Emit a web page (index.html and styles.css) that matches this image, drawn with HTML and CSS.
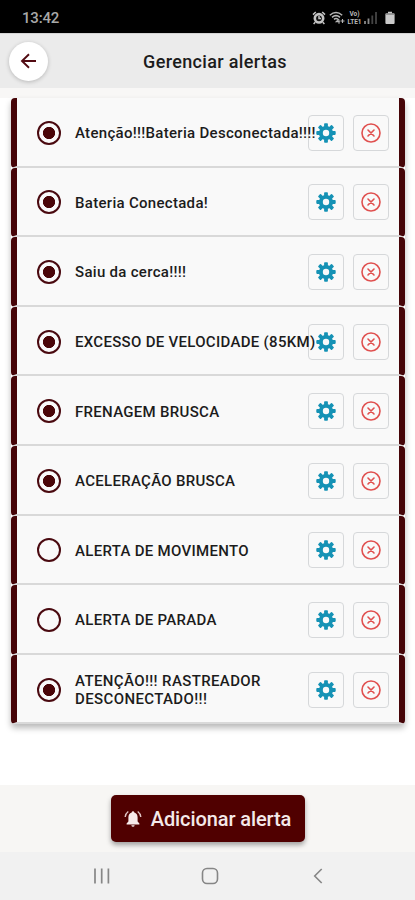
FILE: index.html
```html
<!DOCTYPE html>
<html lang="pt-BR">
<head>
    <meta charset="UTF-8">
    <meta name="viewport" content="width=device-width, initial-scale=1.0">
    <title>Gerenciar alertas</title>
    <link rel="stylesheet" href="styles.css">
</head>
<body>

    <!-- Shared icons -->
    <svg class="sprite" width="0" height="0">
        <symbol id="gear" viewBox="0 0 20 20">
            <g fill="#1592b5">
                <rect x="8.1" y="0.3" width="3.8" height="19.4" rx="0.8"/>
                <rect x="8.1" y="0.3" width="3.8" height="19.4" rx="0.8" transform="rotate(45 10 10)"/>
                <rect x="8.1" y="0.3" width="3.8" height="19.4" rx="0.8" transform="rotate(90 10 10)"/>
                <rect x="8.1" y="0.3" width="3.8" height="19.4" rx="0.8" transform="rotate(135 10 10)"/>
                <circle cx="10" cy="10" r="7.1"/>
            </g>
            <circle cx="10" cy="10" r="3.2" fill="#fafafa"/>
        </symbol>
        <symbol id="remove" viewBox="0 0 20 20">
            <g fill="none" stroke="#e0504f" stroke-width="1.6" stroke-linecap="round">
                <circle cx="10" cy="10" r="9"/>
                <path d="M7 7l6 6M13 7l-6 6"/>
            </g>
        </symbol>
    </svg>

    <div class="status-bar">
        <span class="time">13:42</span>
        <div class="status-icons">
            <svg width="14" height="14" viewBox="0 0 14 14">
                <circle cx="7" cy="7.3" r="4.2" fill="#111" stroke="#c4c4c4" stroke-width="2.6"/>
                <path d="M1 3.6L3.8 1M13 3.6L10.2 1M3.2 11.2L1.6 13M10.8 11.2L12.4 13M7 5v2.5h2" fill="none" stroke="#c4c4c4" stroke-width="1.5"/>
            </svg>
            <svg class="wifi" width="16" height="14" viewBox="0 0 16 14">
                <path d="M0.8 4.2Q7 -1.2 13.2 4.2M3 6.3Q7 3 11 6.3M5 8.4Q7 6.6 9 8.4" fill="none" stroke="#b5b5b5" stroke-width="1.5"/>
                <path d="M9.8 8.2L7.2 10.6h3.6M10 8.5v4.3M11.5 10h4M13.5 8v4" fill="none" stroke="#b5b5b5" stroke-width="1.1"/>
            </svg>
            <span class="volte"><span>Vo)</span><span>LTE1</span></span>
            <svg width="14" height="14" viewBox="0 0 14 14">
                <path d="M1 10v3M4.5 7.5V13" stroke="#8a8a8a" stroke-width="1.8"/>
                <path d="M8.3 4.5V13M12 1v12" stroke="#444" stroke-width="1.8"/>
            </svg>
            <svg class="battery" width="10" height="14" viewBox="0 0 10 14">
                <path d="M3 0.8h4v1.4h1.6q1 0 1 1V12q0 1-1 1H1.4q-1 0-1-1V3.2q0-1 1-1H3z" fill="#c9c9c9"/>
                <path d="M1 3h8" stroke="#777" stroke-width="1.3"/>
            </svg>
        </div>
    </div>

    <header class="header">
        <button class="back" aria-label="Voltar">
            <svg width="18" height="18" viewBox="0 0 18 18">
                <path d="M16 9H2.2M9 2.3L2 9l7 6.7" fill="none" stroke="#520b12" stroke-width="1.9"/>
            </svg>
        </button>
        <h1>Gerenciar alertas</h1>
    </header>

    <main class="content">
        <ul class="alerts">
            <li class="alert">
                <span class="radio checked"></span>
                <span class="name">Atenção!!!Bateria Desconectada!!!!</span>
                <button class="action"><svg><use href="#gear"/></svg></button>
                <button class="action"><svg><use href="#remove"/></svg></button>
            </li>
            <li class="alert">
                <span class="radio checked"></span>
                <span class="name">Bateria Conectada!</span>
                <button class="action"><svg><use href="#gear"/></svg></button>
                <button class="action"><svg><use href="#remove"/></svg></button>
            </li>
            <li class="alert">
                <span class="radio checked"></span>
                <span class="name">Saiu da cerca!!!!</span>
                <button class="action"><svg><use href="#gear"/></svg></button>
                <button class="action"><svg><use href="#remove"/></svg></button>
            </li>
            <li class="alert">
                <span class="radio checked"></span>
                <span class="name">EXCESSO DE VELOCIDADE (85KM)</span>
                <button class="action"><svg><use href="#gear"/></svg></button>
                <button class="action"><svg><use href="#remove"/></svg></button>
            </li>
            <li class="alert">
                <span class="radio checked"></span>
                <span class="name">FRENAGEM BRUSCA</span>
                <button class="action"><svg><use href="#gear"/></svg></button>
                <button class="action"><svg><use href="#remove"/></svg></button>
            </li>
            <li class="alert">
                <span class="radio checked"></span>
                <span class="name">ACELERAÇÃO BRUSCA</span>
                <button class="action"><svg><use href="#gear"/></svg></button>
                <button class="action"><svg><use href="#remove"/></svg></button>
            </li>
            <li class="alert">
                <span class="radio"></span>
                <span class="name">ALERTA DE MOVIMENTO</span>
                <button class="action"><svg><use href="#gear"/></svg></button>
                <button class="action"><svg><use href="#remove"/></svg></button>
            </li>
            <li class="alert">
                <span class="radio"></span>
                <span class="name">ALERTA DE PARADA</span>
                <button class="action"><svg><use href="#gear"/></svg></button>
                <button class="action"><svg><use href="#remove"/></svg></button>
            </li>
            <li class="alert">
                <span class="radio checked"></span>
                <span class="name two-lines">ATENÇÃO!!! RASTREADOR<br>DESCONECTADO!!!</span>
                <button class="action"><svg><use href="#gear"/></svg></button>
                <button class="action"><svg><use href="#remove"/></svg></button>
            </li>
        </ul>
    </main>

    <footer class="footer">
        <button class="add">
            <svg width="18" height="18" viewBox="0 0 18 18">
                <path d="M9 1.2q1.2 0 1.3 1.3Q13.6 3.5 13.6 7.5v4l1.8 2v.9H2.6v-.9l1.8-2v-4Q4.4 3.5 7.7 2.5 7.8 1.2 9 1.2zM7.3 15.2h3.4q-.3 1.5-1.7 1.5t-1.7-1.5z" fill="#f6eaea"/>
                <path d="M4.3 1.5Q1.5 3.5 1.2 7M13.7 1.5Q16.5 3.5 16.8 7" fill="none" stroke="#e0c4c4" stroke-width="1.4"/>
            </svg>
            <span>Adicionar alerta</span>
        </button>
    </footer>

    <nav class="nav-bar">
        <svg width="18" height="18" viewBox="0 0 18 18"><path d="M2 1.5v15M8.7 1.5v15M15.4 1.5v15" stroke="#868686" stroke-width="1.7"/></svg>
        <svg width="18" height="18" viewBox="0 0 18 18"><rect x="1.5" y="1.5" width="15" height="15" rx="4.5" fill="none" stroke="#868686" stroke-width="1.6"/></svg>
        <svg width="18" height="18" viewBox="0 0 18 18"><path d="M12.7 2L5.7 9l7 7" fill="none" stroke="#868686" stroke-width="1.6"/></svg>
    </nav>

</body>
</html>
```
FILE: styles.css
```css
* {
    box-sizing: border-box;
}

body {
    margin: 0;
    height: 900px;
    display: flex;
    flex-direction: column;
    overflow: hidden;
    font-family: Roboto, "Liberation Sans", sans-serif;
    background: #fff;
    color: #1c1c1c;
}

button {
    margin: 0;
    padding: 0;
    border: 0;
    font-family: inherit;
}

.sprite {
    position: absolute;
}

/* Phone status bar */
.status-bar {
    height: 33px;
    flex: none;
    display: flex;
    justify-content: space-between;
    align-items: center;
    padding: 2px 20px 0 22px;
    background: #000;
}

.time {
    font-size: 15px;
    line-height: 16px;
    font-weight: 500;
    letter-spacing: -0.2px;
    color: #a8a8a8;
}

.status-icons {
    display: flex;
    align-items: center;
}

.wifi {
    margin-left: 3px;
}

.volte {
    display: flex;
    flex-direction: column;
    align-items: center;
    width: 17px;
    margin: 0 1px;
    font-size: 6.5px;
    line-height: 8px;
    font-weight: 700;
    color: #b8b8b8;
}

.battery {
    margin-left: 7px;
}

/* Title */
.header {
    height: 55px;
    flex: none;
    display: grid;
    grid-template-columns: 56px 1fr 41px;
    align-items: center;
    background: #ebebeb;
    border-top: 1px solid #d4d4d4;
}

.back {
    width: 39px;
    height: 39px;
    margin-left: 9px;
    display: flex;
    justify-content: center;
    align-items: center;
    border-radius: 50%;
    background: #fff;
    box-shadow: 0 1px 4px rgba(0, 0, 0, 0.22);
}

h1 {
    margin: 1px 0 0;
    font-size: 18px;
    font-weight: 500;
    letter-spacing: 0.35px;
    text-align: center;
}

/* Alert list */
.content {
    flex: 1;
    padding: 10px 10px 0 11px;
    background: linear-gradient(#f8f7f6 10px, #fff 10px);
}

.alerts {
    margin: 0;
    padding: 0;
    list-style: none;
    border-radius: 4px;
    box-shadow: 0 4px 6px rgba(0, 0, 0, 0.28);
}

.alert {
    height: 69.6px;
    display: flex;
    align-items: center;
    padding: 2px 10px 0 20px;
    background: #f9f9f9;
    border-left: 6px solid #460508;
    border-right: 6px solid #460508;
    border-bottom: 2px solid #d9d9d9;
    border-radius: 4px;
}

.radio {
    flex: none;
    width: 24px;
    height: 24px;
    border: 2px solid #4a0a10;
    border-radius: 50%;
}

.checked {
    background: radial-gradient(circle, #4a0508 5.8px, transparent 6.4px);
}

.name {
    position: relative;
    flex: 1;
    min-width: 0;
    margin: 1px 0 0 14px;
    font-size: 15px;
    line-height: 18px;
    font-weight: 500;
    letter-spacing: 0.3px;
    white-space: nowrap;
}

.two-lines {
    letter-spacing: 0.38px;
}

.action {
    flex: none;
    width: 36px;
    height: 36px;
    display: flex;
    justify-content: center;
    align-items: center;
    background: none;
    border: 1px solid #d6d8da;
    border-radius: 4px;
}

.action + .action {
    margin-left: 9px;
}

.action svg {
    width: 20px;
    height: 20px;
}

/* Add button */
.footer {
    height: 67px;
    flex: none;
    display: flex;
    justify-content: center;
    align-items: flex-start;
    padding-top: 10px;
    background: #f7f6f4;
}

.add {
    width: 194px;
    height: 47px;
    display: flex;
    justify-content: center;
    align-items: center;
    gap: 9px;
    background: #500000;
    border-radius: 5px;
    box-shadow: 0 3px 5px rgba(0, 0, 0, 0.35);
    color: #f4e9e9;
    font-size: 20px;
    font-weight: 500;
    letter-spacing: -0.1px;
}

/* Phone navigation */
.nav-bar {
    height: 48px;
    flex: none;
    display: flex;
    justify-content: space-between;
    align-items: center;
    padding: 0 88px 0 93px;
    background: #f1f1f1;
}
```
